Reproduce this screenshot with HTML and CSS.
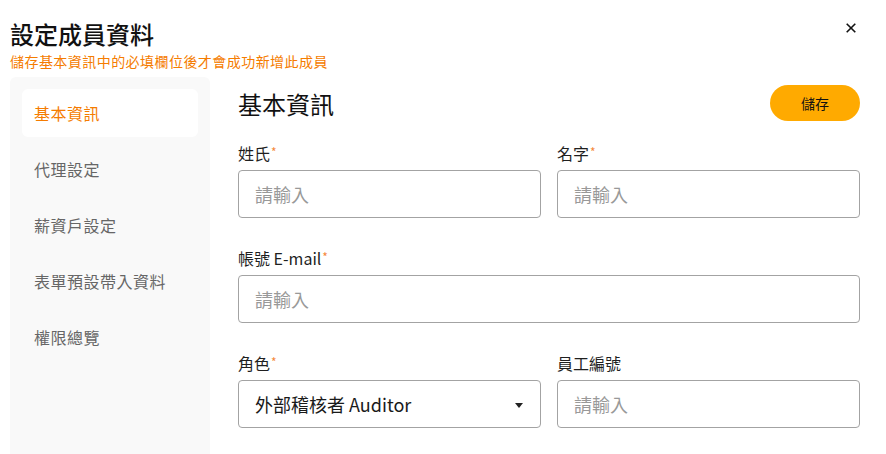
FILE: index.html
```html
<!DOCTYPE html>
<html lang="zh-Hant">
<head>
<meta charset="utf-8">
<title>設定成員資料</title>
<link rel="stylesheet" href="styles.css">
</head>
<body>
<div class="page">
  <header class="top">
    <div class="titles">
      <h1 class="title">設定成員資料</h1>
      <p class="subtitle">儲存基本資訊中的必填欄位後才會成功新增此成員</p>
    </div>
    <button class="close" aria-label="關閉">
      <svg width="10" height="10" viewBox="0 0 10 10"><path d="M0.7 0.7 L9.3 9.3 M9.3 0.7 L0.7 9.3" stroke="#111" stroke-width="1.6" fill="none"/></svg>
    </button>
  </header>
  <div class="body">
    <nav class="side">
      <div class="nav-item active">基本資訊</div>
      <div class="nav-item">代理設定</div>
      <div class="nav-item">薪資戶設定</div>
      <div class="nav-item">表單預設帶入資料</div>
      <div class="nav-item">權限總覽</div>
    </nav>
    <main class="main">
      <div class="main-head">
        <h2 class="section-title">基本資訊</h2>
        <button class="save">儲存</button>
      </div>
      <div class="form">
        <div class="field">
          <label class="label">姓氏<span class="req">*</span></label>
          <div class="input placeholder">請輸入</div>
        </div>
        <div class="field">
          <label class="label">名字<span class="req">*</span></label>
          <div class="input placeholder">請輸入</div>
        </div>
        <div class="field wide">
          <label class="label">帳號 E-mail<span class="req">*</span></label>
          <div class="input placeholder">請輸入</div>
        </div>
        <div class="field">
          <label class="label">角色<span class="req">*</span></label>
          <div class="input select"><span>外部稽核者 Auditor</span><span class="caret"></span></div>
        </div>
        <div class="field">
          <label class="label">員工編號</label>
          <div class="input placeholder">請輸入</div>
        </div>
      </div>
    </main>
  </div>
</div>
</body>
</html>
```

FILE: styles.css
```css
html, body {
  margin: 0;
  height: 100%;
  overflow: hidden;
  background: #fff;
}
body {
  font-family: "Noto Sans CJK TC", "Noto Sans", sans-serif;
  color: #1f1f1f;
}
.page {
  height: 100%;
  display: flex;
  flex-direction: column;
  padding: 18px 26px 0 10px;
  box-sizing: border-box;
}
.top {
  display: flex;
  justify-content: space-between;
  align-items: flex-start;
}
.title {
  margin: 0;
  font-size: 24px;
  line-height: 32px;
  font-weight: 500;
  color: #111;
}
.subtitle {
  margin: 1px 0 0;
  font-size: 14px;
  line-height: 20px;
  letter-spacing: 0.45px;
  color: #f57c00;
}
.close {
  border: 0;
  background: none;
  padding: 0;
  margin: 5px 4px 0 0;
  width: 10px;
  height: 10px;
  display: flex;
}
.body {
  flex: 1;
  display: flex;
  gap: 28px;
  margin-top: 6px;
  min-height: 0;
}
.side {
  width: 200px;
  box-sizing: border-box;
  background: #f9f9f9;
  border-radius: 6px 6px 0 0;
  padding: 12px;
  display: flex;
  flex-direction: column;
  gap: 8px;
}
.nav-item {
  height: 48px;
  display: flex;
  align-items: center;
  padding-left: 12px;
  font-size: 16px;
  letter-spacing: 0.5px;
  color: #666;
  border-radius: 6px;
}
.nav-item.active {
  background: #fff;
  color: #f57c00;
}
.main {
  flex: 1;
  padding-top: 8px;
}
.main-head {
  display: flex;
  justify-content: space-between;
  align-items: center;
  height: 36px;
}
.section-title {
  margin: 0;
  font-size: 24px;
  font-weight: 400;
  color: #111;
}
.save {
  width: 90px;
  height: 36px;
  border: 0;
  border-radius: 18px;
  background: #ffaa00;
  font-family: inherit;
  font-size: 14px;
  color: #111;
}
.form {
  margin-top: 20px;
  display: grid;
  grid-template-columns: 1fr 1fr;
  column-gap: 16px;
  row-gap: 28px;
}
.field.wide {
  grid-column: 1 / -1;
}
.label {
  display: block;
  font-size: 16px;
  line-height: 24px;
  height: 24px;
  margin-bottom: 5px;
  color: #1f1f1f;
}
.req {
  color: #f5883a;
  font-size: 12px;
  position: relative;
  top: -3px;
  margin-left: 1px;
}
.input {
  height: 48px;
  box-sizing: border-box;
  border: 1px solid #a3a3a3;
  border-radius: 4px;
  padding: 0 17px 0 16px;
  display: flex;
  align-items: center;
  font-size: 18px;
}
.placeholder {
  color: #999;
}
.select {
  justify-content: space-between;
  color: #1a1a1a;
}
.caret {
  width: 0;
  height: 0;
  border-left: 4.5px solid transparent;
  border-right: 4.5px solid transparent;
  border-top: 5px solid #222;
  margin-top: 2px;
}
```
